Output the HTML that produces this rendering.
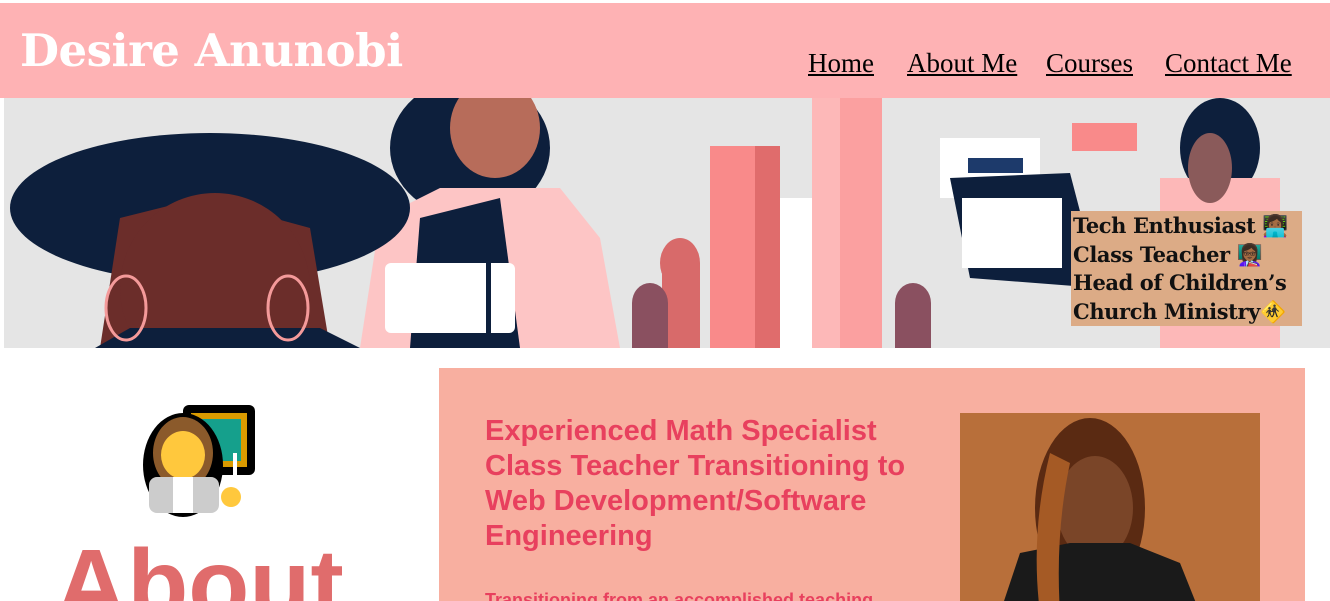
<!DOCTYPE html>
<html><head><meta charset="utf-8"><style>
*{margin:0;padding:0;box-sizing:border-box}
html,body{width:1330px;height:601px;overflow:hidden}
body{background:#fff;position:relative;font-family:"Liberation Serif",serif}
.hdr{position:absolute;left:0;top:3px;width:1330px;height:95px;background:#feb2b4}
.hdr h1{position:absolute;left:20px;top:23px;font-family:"DejaVu Serif",serif;font-size:45px;color:#fff;font-weight:bold;line-height:50px;letter-spacing:-0.5px}
.nav{position:absolute;top:45px;font-size:27px;color:#000;text-decoration:underline;line-height:30px}
.ban{position:absolute;left:0;top:98px;width:1330px;height:250px;background:#e5e5e5;overflow:hidden}
.tag{position:absolute;left:1071px;top:211px;width:231px;height:115px;background:#dcab86;font-family:"DejaVu Serif",serif;font-weight:bold;font-size:21px;line-height:28.5px;padding-left:2px;padding-top:1px;color:#111;white-space:nowrap;overflow:hidden;letter-spacing:-0.4px}
.box{position:absolute;left:439px;top:368px;width:866px;height:233px;background:#f8afa0;overflow:hidden}
.box h2{position:absolute;left:46px;top:46px;width:440px;font-family:"Liberation Sans Narrow","Liberation Sans",sans-serif;font-size:29px;line-height:35px;color:#e8405e;font-weight:bold}
.box p{position:absolute;left:46px;top:222px;font-family:"Liberation Sans",sans-serif;font-size:18px;color:#e8405e;font-weight:bold}
.photo{position:absolute;left:521px;top:45px;width:300px;height:200px;background:#b86f3a;overflow:hidden}
.clip{position:absolute;left:0;top:500px;width:430px;height:101px;overflow:hidden}
.about{position:absolute;left:55px;top:30px;font-family:"Liberation Sans",sans-serif;font-size:100px;font-weight:bold;color:#e06c6c;line-height:110px}
</style></head><body>
<div class="hdr"><h1>Desire Anunobi</h1>
<span class="nav" style="left:808px">Home</span>
<span class="nav" style="left:907px">About Me</span>
<span class="nav" style="left:1046px">Courses</span>
<span class="nav" style="left:1165px">Contact Me</span>
</div>
<div class="ban"><svg width="1330" height="250">
<rect x="0" y="0" width="4" height="250" fill="#fff"/>
<rect x="710" y="48" width="70" height="202" fill="#f98a8a"/>
<rect x="755" y="48" width="25" height="202" fill="#e06c6c"/>
<rect x="780" y="100" width="50" height="150" fill="#fff"/>
<rect x="812" y="0" width="70" height="250" fill="#fdb8b8"/>
<rect x="840" y="0" width="42" height="250" fill="#fba0a0"/>
<rect x="940" y="40" width="100" height="60" fill="#fff"/>
<rect x="968" y="60" width="55" height="15" fill="#1d3a6b"/>
<path d="M950 80 L1070 75 L1100 190 L970 180 Z" fill="#0d1f3c"/>
<rect x="962" y="100" width="100" height="70" fill="#fff"/>
<rect x="1072" y="25" width="65" height="28" fill="#f98a8a"/>
<ellipse cx="1220" cy="50" rx="40" ry="50" fill="#0d1f3c"/>
<rect x="1160" y="80" width="120" height="170" fill="#fdb8b8"/>
<ellipse cx="1210" cy="70" rx="22" ry="35" fill="#8a5a5a"/>
<ellipse cx="680" cy="165" rx="20" ry="25" fill="#d86a6a"/>
<rect x="662" y="165" width="38" height="85" fill="#d86a6a"/>
<ellipse cx="650" cy="205" rx="18" ry="20" fill="#8a5060"/>
<rect x="632" y="205" width="36" height="45" fill="#8a5060"/>
<ellipse cx="913" cy="205" rx="18" ry="20" fill="#8a5060"/>
<rect x="895" y="205" width="36" height="45" fill="#8a5060"/>
<ellipse cx="470" cy="50" rx="80" ry="70" fill="#0d1f3c"/>
<path d="M360 250 L380 120 L440 90 L560 90 L600 140 L620 250 Z" fill="#fdc5c5"/>
<path d="M410 250 L420 120 L500 100 L520 250 Z" fill="#0d1f3c"/>
<ellipse cx="495" cy="30" rx="45" ry="50" fill="#b76c5a"/>
<rect x="385" y="165" width="130" height="70" rx="6" fill="#fff"/>
<rect x="486" y="165" width="5" height="70" fill="#0d1f3c"/>
<ellipse cx="210" cy="110" rx="200" ry="75" fill="#0d1f3c"/>
<path d="M100 250 L120 120 L200 100 L310 130 L330 250 Z" fill="#6b2d2a"/>
<ellipse cx="215" cy="190" rx="95" ry="95" fill="#6b2d2a"/>
<path d="M95 250 L130 230 L320 230 L360 250Z" fill="#0d1f3c"/>
<ellipse cx="126" cy="210" rx="20" ry="32" fill="none" stroke="#f49a9a" stroke-width="3"/>
<ellipse cx="288" cy="210" rx="20" ry="32" fill="none" stroke="#f49a9a" stroke-width="3"/>
</svg></div>
<div class="tag">Tech Enthusiast 👩🏾‍💻<br>Class Teacher 👩🏾‍🏫<br>Head of Children’s<br>Church Ministry🚸</div>
<svg style="position:absolute;left:143px;top:405px" width="113" height="113">
<rect x="40" y="0" width="72" height="70" rx="6" fill="#000"/>
<rect x="48" y="8" width="56" height="54" fill="#d99a00"/>
<rect x="54" y="14" width="44" height="42" fill="#15a08c"/>
<ellipse cx="40" cy="60" rx="40" ry="52" fill="#000"/>
<ellipse cx="40" cy="48" rx="30" ry="36" fill="#8b5a2b"/>
<ellipse cx="40" cy="50" rx="22" ry="24" fill="#ffc83d"/>
<rect x="6" y="72" width="70" height="36" rx="8" fill="#ccc"/>
<rect x="30" y="72" width="20" height="36" fill="#fff"/>
<rect x="90" y="48" width="4" height="40" fill="#fff"/>
<circle cx="88" cy="92" r="10" fill="#ffc83d"/>
</svg>
<div class="clip"><div class="about">About</div></div>
<div class="box"><h2>Experienced Math Specialist Class Teacher Transitioning to Web Development/Software Engineering</h2>
<p>Transitioning from an accomplished teaching</p>
<div class="photo"><svg width="300" height="200">
<ellipse cx="130" cy="95" rx="55" ry="90" fill="#5a2a12"/>
<ellipse cx="135" cy="95" rx="38" ry="52" fill="#7a4528"/>
<path d="M40 200 L60 140 L110 130 L170 130 L220 150 L240 200Z" fill="#1a1a1a"/>
<path d="M90 40 Q70 120 80 200 L100 200 Q95 120 110 50Z" fill="#a55a25"/>
</svg></div>
</div>
</body></html>
